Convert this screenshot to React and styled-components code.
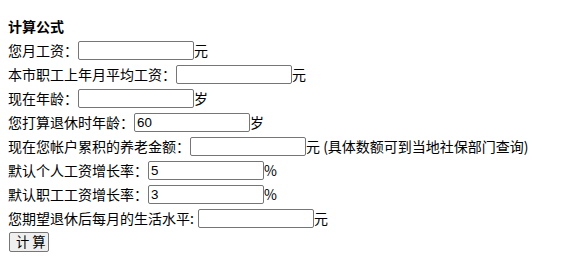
import React from 'react'
import styled, { createGlobalStyle } from 'styled-components'

const GlobalStyle = createGlobalStyle`
    body {
        margin: 8px;
        background: #FFFFFF;
        color: #000000;
        font-family: "Noto Sans CJK SC", "Noto Sans", sans-serif;
        font-size: 14px;
    }
`
const Form = styled.div`
    padding-top: 6px;
    display: flex;
    flex-direction: column;
`
const Title = styled.div`
    height: 24px;
    line-height: 24px;
    font-weight: 700;
    font-size: 14px;
`
const Row = styled.div`
    height: 24px;
    display: flex;
    align-items: center;
    white-space: nowrap;
`
const Label = styled.span`
    margin-right: ${p => p.$space ? '4px' : '0'};
`
const Field = styled.input`
    box-sizing: border-box;
    width: 116px;
    height: 19px;
    margin: 0;
    padding: 1px 2px;
    border: 1px solid #767676;
    border-radius: 2px;
    font-family: "Liberation Sans", Arial, sans-serif;
    font-size: 13.33px;
    color: #000000;
    background: #FFFFFF;
    outline: none;
`
const Unit = styled.span`
    margin-left: 0;
`
const Button = styled.button`
    box-sizing: border-box;
    width: 40px;
    height: 20px;
    margin: 0 0 0 1px;
    padding: 0 6px;
    border: 1px solid #767676;
    border-radius: 2px;
    background: #EFEFEF;
    font-family: "Noto Sans CJK SC", sans-serif;
    font-size: 13.33px;
    line-height: 18px;
    color: #000000;
    white-space: pre;
`

const rows = [
    { label: '您月工资：', unit: '元' },
    { label: '本市职工上年月平均工资：', unit: '元' },
    { label: '现在年龄：', unit: '岁' },
    { label: '您打算退休时年龄：', unit: '岁', value: '60' },
    { label: '现在您帐户累积的养老金额：', unit: '元 (具体数额可到当地社保部门查询)' },
    { label: '默认个人工资增长率：', unit: '%', value: '5' },
    { label: '默认职工工资增长率：', unit: '%', value: '3' },
    { label: '您期望退休后每月的生活水平:', unit: '元', space: true },
]

export default function App() {
    return (
        <>
            <GlobalStyle />
            <Form>
                <Title>计算公式</Title>
                {rows.map(r => (
                    <Row key={r.label}>
                        <Label $space={r.space}>{r.label}</Label>
                        <Field type="text" defaultValue={r.value || ''} />
                        <Unit>{r.unit}</Unit>
                    </Row>
                ))}
                <Row>
                    <Button>{'计 算'}</Button>
                </Row>
            </Form>
        </>
    )
}
